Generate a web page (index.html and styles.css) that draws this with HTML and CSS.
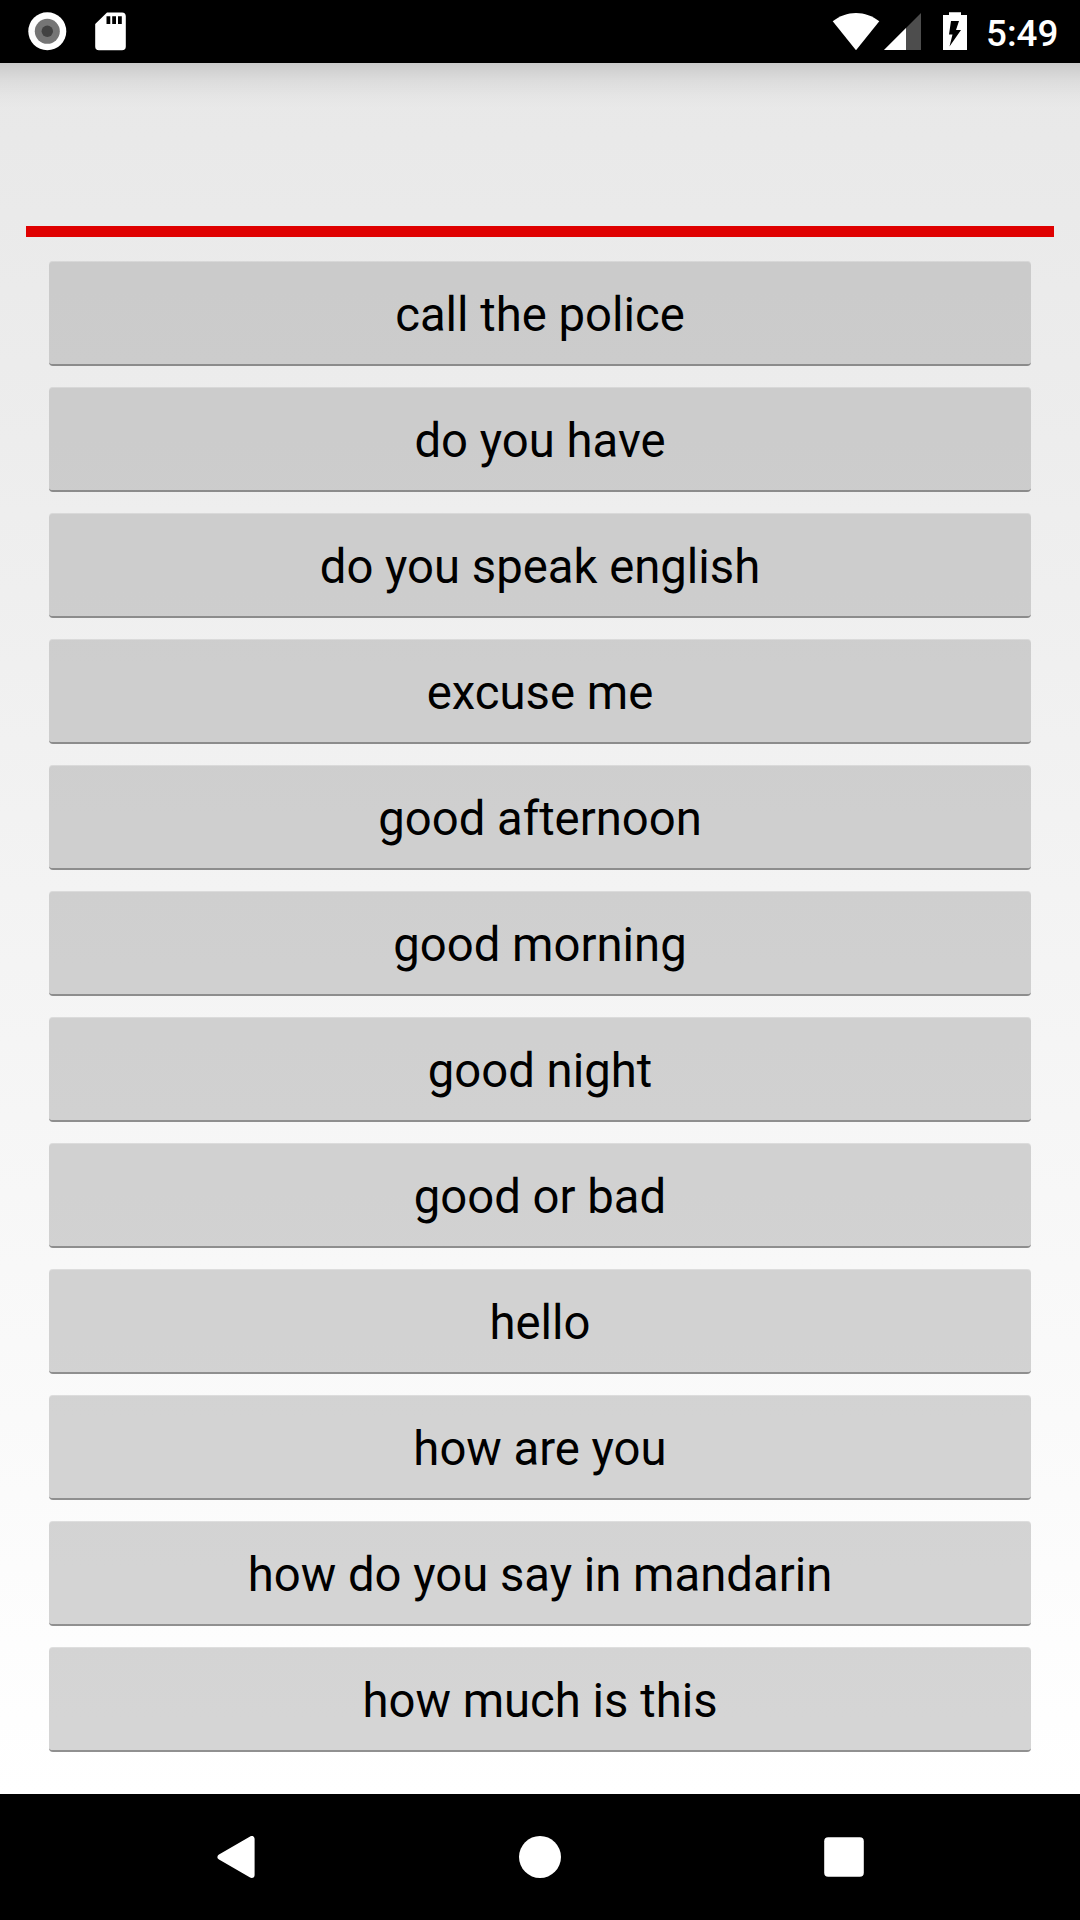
FILE: index.html
```html
<!DOCTYPE html>
<html lang="en">
<head>
    <meta charset="UTF-8">
    <meta name="viewport" content="width=device-width, initial-scale=1.0">
    <title>Phrasebook</title>

    <link rel="stylesheet" href="styles.css">
</head>
<body>

    <!-- Status bar -->
    <header class="status-bar">
        <svg class="status-left" width="140" height="63" viewBox="0 0 140 63">
            <circle cx="47.3" cy="31.3" r="19" fill="#fff"/>
            <circle cx="47.3" cy="31.3" r="12.5" fill="#757575"/>
            <circle cx="47.3" cy="31.3" r="5.7" fill="#424242"/>
            <path fill="#fff" fill-rule="evenodd" d="M107 12.5H122a3.8 3.8 0 0 1 3.8 3.8V46.500a3.8 3.8 0 0 1-3.8 3.800H99a3.800 3.800 0 0 1-3.800-3.800V24zM106.500 16.300V24H110.300V16.300zM112.200 16.300V24H116V16.300zM118 16.300V24H121.800V16.300z"/>
        </svg>
        <div class="status-right">
            <svg width="156" height="63" viewBox="830 0 156 63">
                <path fill="#fff" d="M856 50.300L832.700 21.300C839.500 16 847.500 13 856 13S872.500 16 879.300 21.300z"/>
                <path fill="#4d4d4d" d="M921 13V50H884z"/>
                <path fill="#fff" d="M906 28V50H884z"/>
                <path fill="#fff" fill-rule="evenodd" d="M949 12.300H961V15H967V50H943V15H949zM951 21L949 34.500H952.500L949.500 46.500L961 30H956L959 21z"/>
            </svg>
            <span class="clock">5:49</span>
        </div>
    </header>

    <!-- List of phrases -->
    <main class="content">
        <div class="phrase-title"></div>
        <div class="phrase-list">
            <button class="phrase">call the police</button>
            <button class="phrase">do you have</button>
            <button class="phrase">do you speak english</button>
            <button class="phrase">excuse me</button>
            <button class="phrase">good afternoon</button>
            <button class="phrase">good morning</button>
            <button class="phrase">good night</button>
            <button class="phrase">good or bad</button>
            <button class="phrase">hello</button>
            <button class="phrase">how are you</button>
            <button class="phrase">how do you say in mandarin</button>
            <button class="phrase">how much is this</button>
        </div>
    </main>

    <!-- Navigation bar -->
    <nav class="nav-bar">
        <svg width="42" height="42" viewBox="0 0 42 42">
            <path fill="#fff" stroke="#fff" stroke-width="6" stroke-linejoin="round" d="M5.500 21L36.600 3V39z"/>
        </svg>
        <svg width="42" height="42" viewBox="0 0 42 42">
            <circle cx="21" cy="21" r="21" fill="#fff"/>
        </svg>
        <svg width="42" height="42" viewBox="0 0 42 42">
            <rect x="1.200" y="1.200" width="39.600" height="39.600" rx="4" fill="#fff"/>
        </svg>
    </nav>

</body>
</html>
```
FILE: styles.css
```css
* {
    box-sizing: border-box;
}

body {
    margin: 0;
    width: 1080px;
    height: 1920px;
    display: flex;
    flex-direction: column;
    overflow: hidden;
    background-color: #000;
    font-family: Roboto, sans-serif;
}

svg {
    display: block;
}

.status-bar {
    height: 63px;
    display: flex;
    justify-content: space-between;
    background-color: #000;
}

.status-right {
    display: flex;
    padding-right: 22px;
}

.clock {
    width: 72px;
    color: #fff;
    font-size: 36.75px;
    font-weight: 500;
    line-height: 67px;
    text-align: right;
}

/* drop shadow of the status bar sits over the page gradient */
.content {
    height: 1731px;
    padding: 0 26px;
    background: linear-gradient(rgba(0, 0, 0, 0.13), rgba(0, 0, 0, 0.05) 18px, rgba(0, 0, 0, 0.015) 32px, transparent 46px),
                linear-gradient(#e8e8e8, #fff);
}

.phrase-title {
    height: 174px;
    border-bottom: 11px solid #df0000;
}

.phrase-list {
    display: flex;
    flex-direction: column;
    gap: 21px;
    padding: 24px 23px 0;
}

.phrase {
    height: 105px;
    padding: 5px 0 0;
    border: none;
    border-bottom: 2px solid rgba(60, 60, 60, 0.45);
    border-radius: 4px;
    background-color: rgba(171, 171, 171, 0.5);
    box-shadow: inset 0 1px 0 rgba(255, 255, 255, 0.25);
    color: #000;
    font-family: Roboto, sans-serif;
    font-size: 47.25px;
    line-height: 98px;
}

.nav-bar {
    height: 126px;
    display: flex;
    justify-content: center;
    align-items: center;
    gap: 262px;
    background-color: #000;
}
```
